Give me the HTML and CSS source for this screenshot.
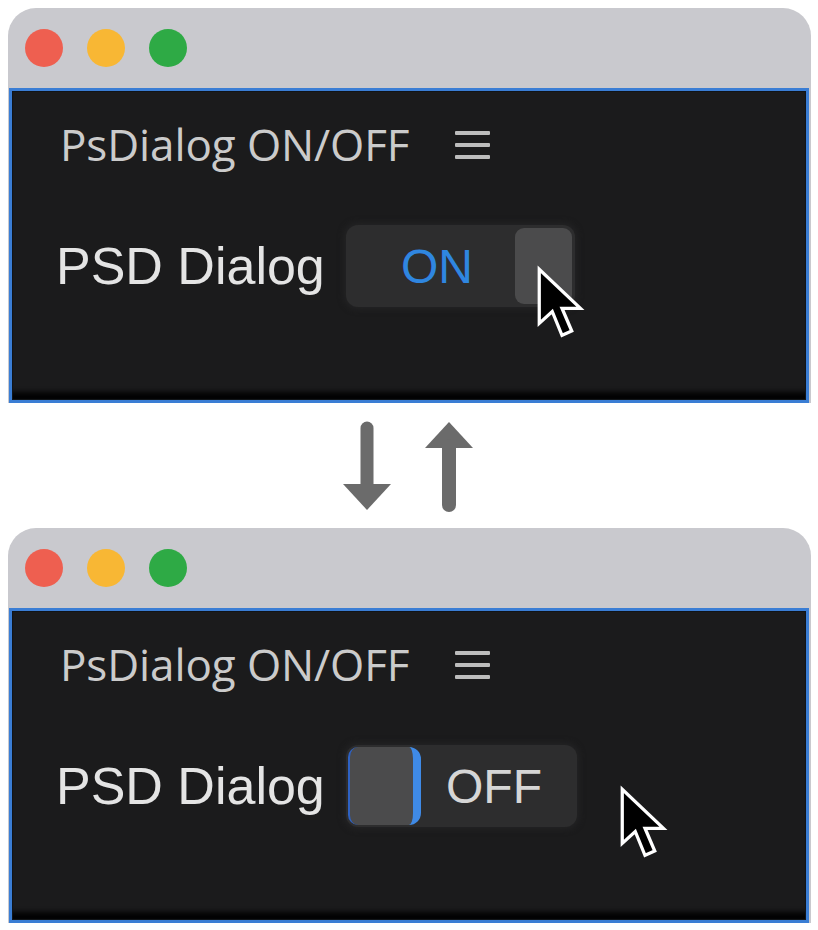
FILE: index.html
```html
<!DOCTYPE html>
<html lang="en">
<head>
<meta charset="UTF-8">
<title>PsDialog ON/OFF</title>
<link rel="stylesheet" href="styles.css">
</head>
<body>
<div class="page">

    <!-- state: ON -->
    <div class="window">
        <div class="titlebar">
            <span class="light light-red"></span>
            <span class="light light-yellow"></span>
            <span class="light light-green"></span>
        </div>
        <div class="panel">
            <div class="panel-head">
                <span class="panel-title">PsDialog ON/OFF</span>
                <span class="menu-icon"><i></i><i></i><i></i></span>
            </div>
            <div class="panel-row">
                <span class="row-label">PSD Dialog</span>
                <div class="toggle toggle-on">
                    <span class="toggle-text">ON</span>
                    <span class="toggle-thumb"></span>
                    <svg class="cursor cursor-on" width="52" height="80" viewBox="0 0 48 72">
                        <path d="M3 3 L3 53 L15 42 L24 64 L33 60 L24 39 L41 39 Z" fill="#000" stroke="#fff" stroke-width="3" stroke-linejoin="miter"/>
                    </svg>
                </div>
            </div>
        </div>
    </div>

    <!-- arrows -->
    <div class="swap">
        <svg width="50" height="92" viewBox="0 0 50 92">
            <line x1="25" y1="8" x2="25" y2="66" stroke="#6b6b6b" stroke-width="13" stroke-linecap="round"/>
            <path d="M1 64 L49 64 L25 90 Z" fill="#6b6b6b"/>
        </svg>
        <svg width="50" height="92" viewBox="0 0 50 92">
            <path d="M1 28 L49 28 L25 2 Z" fill="#6b6b6b"/>
            <line x1="25" y1="26" x2="25" y2="85" stroke="#6b6b6b" stroke-width="14" stroke-linecap="round"/>
        </svg>
    </div>

    <!-- state: OFF -->
    <div class="window">
        <div class="titlebar">
            <span class="light light-red"></span>
            <span class="light light-yellow"></span>
            <span class="light light-green"></span>
        </div>
        <div class="panel">
            <div class="panel-head">
                <span class="panel-title">PsDialog ON/OFF</span>
                <span class="menu-icon"><i></i><i></i><i></i></span>
            </div>
            <div class="panel-row">
                <span class="row-label">PSD Dialog</span>
                <div class="toggle toggle-off">
                    <span class="toggle-thumb"></span>
                    <span class="toggle-text">OFF</span>
                    <svg class="cursor cursor-off" width="52" height="80" viewBox="0 0 48 72">
                        <path d="M3 3 L3 53 L15 42 L24 64 L33 60 L24 39 L41 39 Z" fill="#000" stroke="#fff" stroke-width="3" stroke-linejoin="miter"/>
                    </svg>
                </div>
            </div>
        </div>
    </div>

</div>
</body>
</html>
```

FILE: styles.css
```css
/* base */
body, html {
    margin: 0;
    padding: 0;
    background: #ffffff;
}

.page {
    padding: 8px 7px 0 8px;
}

/* window frame */
.window {
    width: 803px;
    background: #c9c9ce;
    border-radius: 28px 28px 0 0;
    overflow: hidden;
}

.titlebar {
    height: 80px;
    display: flex;
    align-items: center;
    gap: 24px;
    padding-left: 17px;
    box-sizing: border-box;
}

.light {
    width: 38px;
    height: 38px;
    border-radius: 50%;
}

.light-red { background: #ee5f50; }
.light-yellow { background: #f8b734; }
.light-green { background: #2eaa45; }

/* dark panel */
.panel {
    height: 315px;
    background: #1b1b1c;
    border: 3px solid #3a7dd4;
    outline: 1px solid #101418;
    outline-offset: -4px;
    box-shadow: inset 0 -12px 5px -4px #030304;
    box-sizing: border-box;
    margin: 0 2px 0 1px;
    padding: 26px 0 0 48px;
}

.panel-head {
    display: flex;
    align-items: center;
    gap: 46px;
    height: 54px;
}

.panel-title {
    font-family: "Open Sans", sans-serif;
    font-size: 44px;
    color: #cbcbcb;
    letter-spacing: -0.1px;
}

.menu-icon {
    display: flex;
    flex-direction: column;
    gap: 8px;
    width: 35px;
    margin-top: 2px;
}

.menu-icon i {
    display: block;
    height: 4px;
    background: #bdbdbd;
    border-radius: 1px;
}

/* switch row */
.panel-row {
    display: flex;
    align-items: center;
    margin-top: 54px;
    margin-left: -4px;
}

.row-label {
    font-family: "Liberation Sans", Arial, sans-serif;
    font-size: 52px;
    color: #e4e4e4;
    width: 290px;
}

.toggle {
    position: relative;
    width: 229px;
    height: 82px;
    background: #2d2d2e;
    border-radius: 12px;
    box-shadow: 0 0 6px 2px #242425;
    display: flex;
    align-items: center;
    box-sizing: border-box;
    padding: 3px;
}

.toggle-text {
    font-family: "Liberation Sans", Arial, sans-serif;
    font-size: 48px;
    flex: 1;
    text-align: center;
}

.toggle-thumb {
    height: 76px;
    background: #4b4b4c;
    border-radius: 9px;
    box-sizing: border-box;
}

.toggle-on .toggle-text {
    color: #2f86e0;
    padding-left: 10px;
}

.toggle-on .toggle-thumb {
    width: 57px;
}

.toggle-off {
    width: 231px;
    padding: 2px;
}

.toggle-off .toggle-text {
    color: #d6d6d6;
    padding-right: 8px;
}

.toggle-off .toggle-thumb {
    width: 73px;
    height: 78px;
    border-left: 2px solid #2e62c4;
    border-right: 8px solid #3f8ae6;
    border-radius: 10px 12px 12px 10px;
}

/* mouse pointer, drawn over the switch */
.cursor {
    position: absolute;
}

.cursor-on {
    left: 190px;
    top: 40px;
}

.cursor-off {
    left: 273px;
    top: 40px;
}

/* swap arrows between the two states */
.swap {
    height: 125px;
    display: flex;
    justify-content: center;
    align-items: center;
    gap: 32px;
    padding-right: 4px;
}
```
